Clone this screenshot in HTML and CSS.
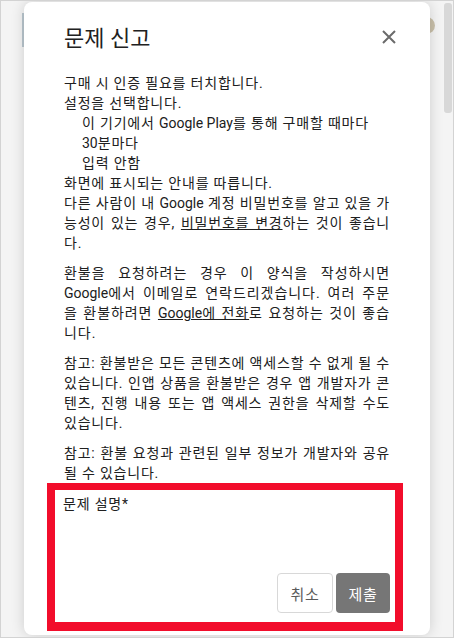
FILE: index.html
```html
<!DOCTYPE html>
<html lang="ko">
<head>
<meta charset="utf-8">
<title>문제 신고</title>
<link rel="stylesheet" href="styles.css">
</head>
<body>
<div class="page">
  <div class="bg-strip"></div>
  <div class="bg-avatar"></div>
  <div class="bg-scrollbar"></div>
  <div class="dialog" role="dialog">
    <header class="dialog-header">
      <h1 class="dialog-title">문제 신고</h1>
      <button class="close-btn" aria-label="닫기">
        <svg width="14" height="14" viewBox="0 0 14 14"><path d="M1 1L13 13M13 1L1 13" stroke="#6b6b6b" stroke-width="2" fill="none"/></svg>
      </button>
    </header>
    <div class="dialog-body">
      <div class="para">
        <div>구매 시 인증 필요를 터치합니다.</div>
        <div>설정을 선택합니다.</div>
        <div class="indent">이 기기에서 <span class="latin">Google Play</span>를 통해 구매할 때마다</div>
        <div class="indent"><span class="latin">30</span>분마다</div>
        <div class="indent">입력 안함</div>
        <div>화면에 표시되는 안내를 따릅니다.</div>
        <div>다른 사람이 내 <span class="latin">Google</span> 계정 비밀번호를 알고 있을 가능성이 있는 경우, <a class="link">비밀번호를 변경</a>하는 것이 좋습니다.</div>
      </div>
      <p class="para para-wide">환불을 요청하려는 경우 이 양식을 작성하시면 <span class="latin">Google</span>에서 이메일로 연락드리겠습니다. 여러 주문을 환불하려면 <a class="link"><span class="latin">Google</span>에 전화</a>로 요청하는 것이 좋습니다.</p>
      <p class="para">참고: 환불받은 모든 콘텐츠에 액세스할 수 없게 될 수 있습니다. 인앱 상품을 환불받은 경우 앱 개발자가 콘텐츠, 진행 내용 또는 앱 액세스 권한을 삭제할 수도 있습니다.</p>
      <p class="para">참고: 환불 요청과 관련된 일부 정보가 개발자와 공유될 수 있습니다.</p>
    </div>
    <form class="report-form">
      <label class="field-label">문제 설명*</label>
      <div class="actions">
        <button type="button" class="btn btn-cancel">취소</button>
        <button type="button" class="btn btn-submit">제출</button>
      </div>
    </form>
  </div>
</div>
</body>
</html>
```
FILE: styles.css
```css
* { box-sizing: border-box; }
html, body { margin: 0; padding: 0; }
body {
  width: 454px;
  height: 638px;
  overflow: hidden;
  font-family: Roboto, "Noto Sans CJK KR", sans-serif;
  color: #202020;
}
.page {
  position: relative;
  width: 454px;
  height: 638px;
  background: #f4f4f4;
  border: 1px solid #d3d3d3;
  padding: 1px 0 0 23px;
  overflow: hidden;
}
.bg-strip {
  position: absolute;
  left: 21px;
  top: 12px;
  width: 6px;
  height: 34px;
  background: #b9c6ce;
}
.bg-avatar {
  position: absolute;
  left: 417px;
  top: 16px;
  width: 17px;
  height: 17px;
  border-radius: 50%;
  background: #c9c0aa;
}
.bg-scrollbar {
  position: absolute;
  left: 443px;
  top: 2px;
  width: 8px;
  height: 110px;
  border-radius: 3px;
  background: #d8d8d8;
}
.dialog {
  position: relative;
  z-index: 1;
  width: 406px;
  height: 633px;
  background: #fff;
  border-radius: 8px;
  box-shadow: 0 0 14px rgba(0,0,0,0.16);
  overflow: hidden;
}
.dialog-header {
  display: flex;
  justify-content: space-between;
  align-items: flex-start;
  padding: 23px 34px 0 40px;
}
.dialog-title {
  margin: 0;
  font-size: 22px;
  line-height: 28px;
  font-weight: 400;
  color: #212121;
}
.close-btn {
  border: 0;
  background: none;
  padding: 0;
  margin-top: 5px;
  width: 14px;
  height: 14px;
  display: flex;
}
.dialog-body {
  padding: 20px 40px 0 40px;
  font-size: 14px;
  line-height: 20px;
  letter-spacing: 0.8px;
}
.latin { letter-spacing: 0; }
.para {
  margin: 0 0 10px 0;
  text-align: justify;
}
.para:last-child { margin-bottom: 0; }
.para-wide { letter-spacing: 0.95px; }
.indent { padding-left: 18px; }
.link {
  color: inherit;
  text-decoration: underline;
}
.report-form {
  margin: 0 27px 0 23px;
  border: 7px solid #f20d2b;
  border-bottom-width: 9px;
  border-left-width: 8px;
  border-right-width: 8px;
  height: 148px;
  padding: 4px 5px 9px 8px;
  display: flex;
  flex-direction: column;
  justify-content: space-between;
}
.field-label {
  font-size: 14px;
  line-height: 20px;
  letter-spacing: 0.8px;
  color: #202020;
}
.actions {
  display: flex;
  justify-content: flex-end;
  gap: 3px;
}
.btn {
  height: 40px;
  border-radius: 4px;
  font-family: Roboto, "Noto Sans CJK KR", sans-serif;
  font-size: 15px;
  letter-spacing: 0.6px;
  padding: 0;
}
.btn-cancel {
  width: 56px;
  background: #fff;
  border: 1px solid #d8d8d8;
  color: #5a5a5a;
}
.btn-submit {
  width: 54px;
  background: #767676;
  border: 0;
  color: #fff;
}
```
